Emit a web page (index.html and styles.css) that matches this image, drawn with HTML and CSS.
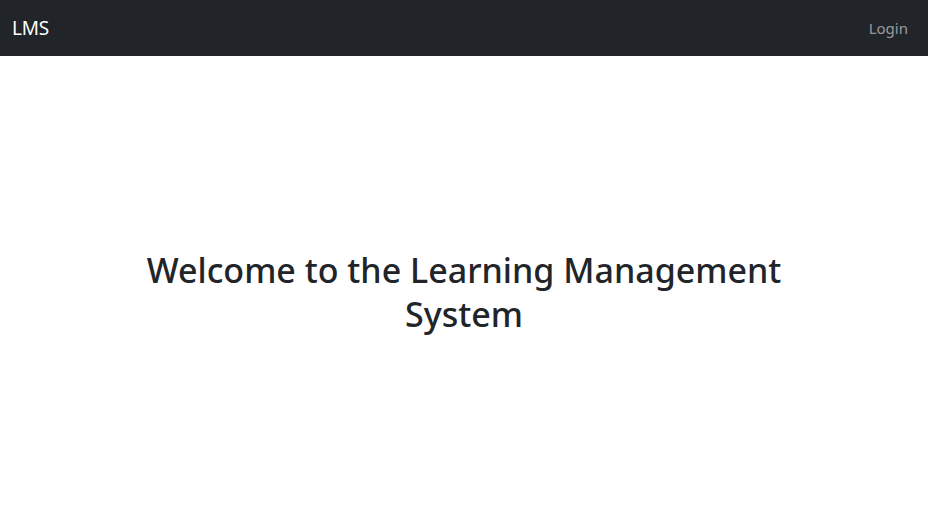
FILE: index.html
```html
<!DOCTYPE html>
<html lang="en">
<head>
<meta charset="utf-8">
<title>LMS</title>
<link rel="stylesheet" href="styles.css">
</head>
<body>
<nav class="navbar">
  <a class="brand" href="#">LMS</a>
  <a class="nav-link" href="#">Login</a>
</nav>
<main class="hero">
  <div class="container">
    <h1 class="title">Welcome to the Learning Management System</h1>
  </div>
</main>
</body>
</html>
```

FILE: styles.css
```css
* { box-sizing: border-box; }
html, body { margin: 0; height: 100%; }
body {
  font-family: "Noto Sans", "Open Sans", "Liberation Sans", sans-serif;
  color: #212529;
  background: #fff;
  display: flex;
  flex-direction: column;
}
.navbar {
  height: 56px;
  flex: 0 0 56px;
  background: #212529;
  display: flex;
  align-items: center;
  justify-content: space-between;
  padding: 0 12px;
}
.brand {
  color: #fff;
  font-size: 19px;
  text-decoration: none;
  letter-spacing: -0.2px;
}
.nav-link {
  color: rgba(255,255,255,.55);
  font-size: 15px;
  text-decoration: none;
  padding: 8px;
}
.hero {
  flex: 1;
  display: flex;
  align-items: center;
  justify-content: center;
  padding-bottom: 4px;
}
.container {
  width: 696px;
  text-align: center;
}
.title {
  margin: 0;
  font-size: 34px;
  font-weight: 500;
  line-height: 44px;
  letter-spacing: 0;
}
```
